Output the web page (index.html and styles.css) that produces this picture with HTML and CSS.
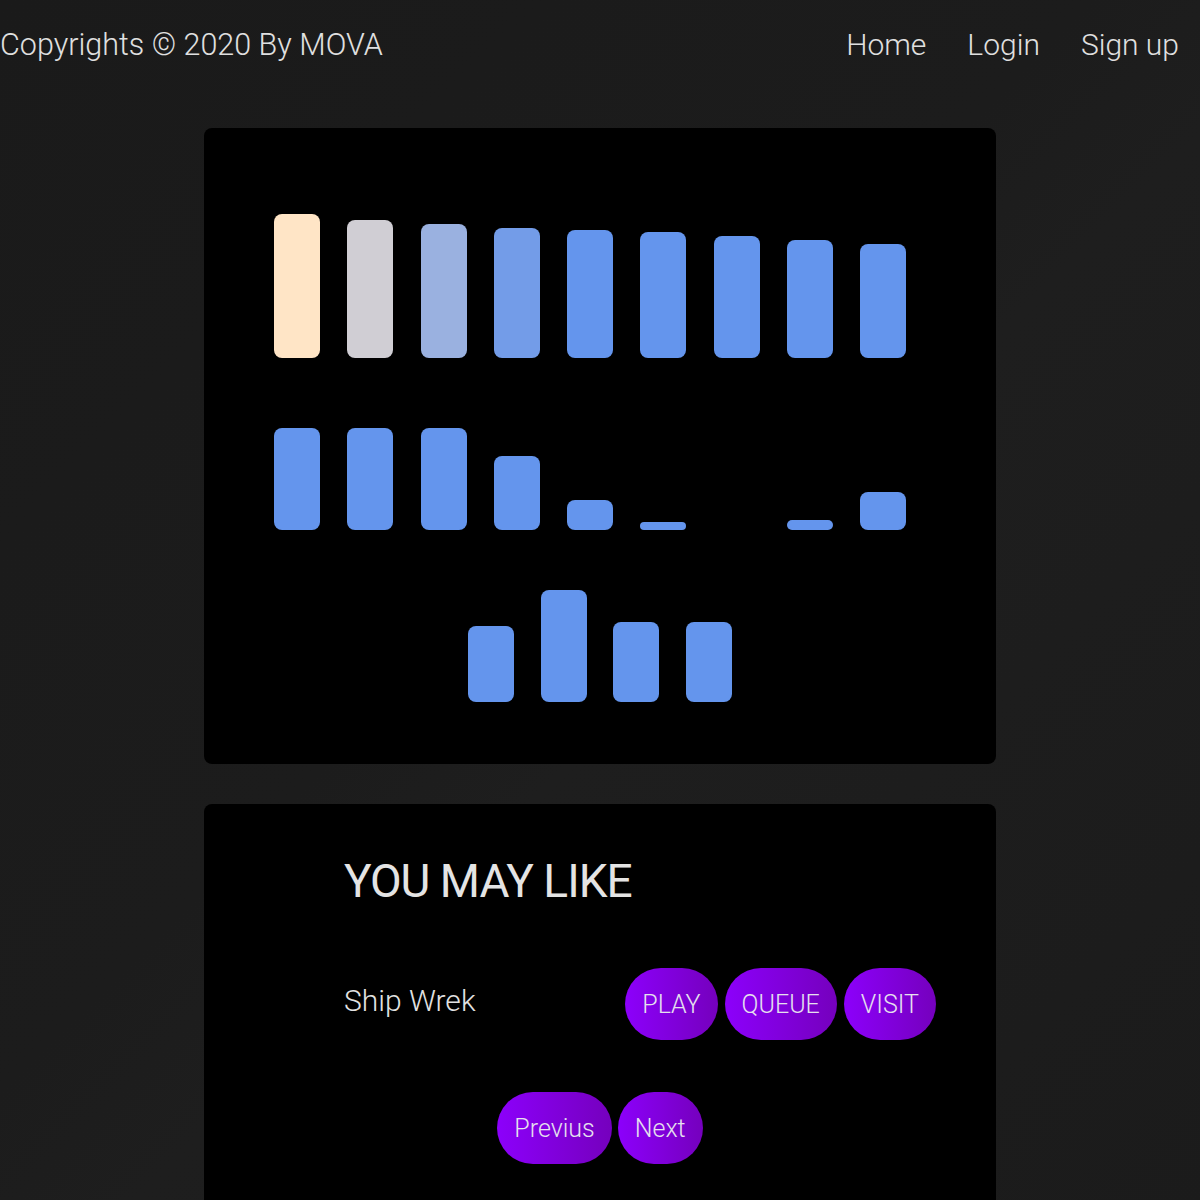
FILE: index.html
```html
<!DOCTYPE html>
<html lang="en">
<head>
<meta charset="utf-8">
<title>MOVA</title>
<link rel="stylesheet" href="styles.css">
</head>
<body>
<header class="topbar">
  <div class="copy">Copyrights © 2020 By MOVA</div>
  <nav class="nav">
    <a class="nav-link" href="#">Home</a>
    <a class="nav-link" href="#">Login</a>
    <a class="nav-link" href="#">Sign up</a>
  </nav>
</header>

<main class="main">
  <section class="card visual">
    <div class="bar-row">
      <div class="bar bar-c1" style="height:144px"></div>
      <div class="bar bar-c2" style="height:138px"></div>
      <div class="bar bar-c3" style="height:134px"></div>
      <div class="bar bar-c4" style="height:130px"></div>
      <div class="bar" style="height:128px"></div>
      <div class="bar" style="height:126px"></div>
      <div class="bar" style="height:122px"></div>
      <div class="bar" style="height:118px"></div>
      <div class="bar" style="height:114px"></div>
    </div>
    <div class="bar-row">
      <div class="bar" style="height:102px"></div>
      <div class="bar" style="height:102px"></div>
      <div class="bar" style="height:102px"></div>
      <div class="bar" style="height:74px"></div>
      <div class="bar" style="height:30px"></div>
      <div class="bar" style="height:8px"></div>
      <div class="bar" style="height:0px"></div>
      <div class="bar" style="height:10px"></div>
      <div class="bar" style="height:38px"></div>
    </div>
    <div class="bar-row bar-row-center">
      <div class="bar" style="height:76px"></div>
      <div class="bar" style="height:112px"></div>
      <div class="bar" style="height:80px"></div>
      <div class="bar" style="height:80px"></div>
    </div>
  </section>

  <section class="card like">
    <h1 class="like-title">YOU MAY LIKE</h1>
    <div class="song">
      <div class="song-name">Ship Wrek</div>
      <div class="song-actions">
        <button class="pill">PLAY</button>
        <button class="pill">QUEUE</button>
        <button class="pill">VISIT</button>
      </div>
    </div>
    <div class="pager">
      <button class="pill">Previus</button>
      <button class="pill">Next</button>
    </div>
  </section>
</main>
</body>
</html>
```

FILE: styles.css
```css
* { box-sizing: border-box; }

html, body {
  margin: 0;
  padding: 0;
}

body {
  min-height: 1200px;
  background: linear-gradient(135deg, #1a1a1a 0%, #1c1c1c 45%, #1e1e1e 55%, #1b1b1b 100%);
  color: #e2e2e2;
  font-family: Roboto, "Liberation Sans", sans-serif;
  overflow: hidden;
}

.topbar {
  height: 90px;
  display: flex;
  align-items: center;
  justify-content: space-between;
  padding: 0 21px 0 0;
}

.copy {
  font-size: 30.5px;
  line-height: 32px;
  font-weight: 300;
  color: #e0e0e0;
}

.nav {
  display: flex;
  gap: 41px;
}

.nav-link {
  font-size: 30px;
  line-height: 32px;
  font-weight: 300;
  color: #e0e0e0;
  text-decoration: none;
}

.main {
  display: flex;
  flex-direction: column;
  align-items: center;
  gap: 40px;
  padding-top: 38px;
}

.card {
  width: 792px;
  background: #000;
  border-radius: 8px;
}

.visual {
  height: 636px;
  padding: 58px 0 0 70px;
}

.bar-row {
  height: 172px;
  display: flex;
  align-items: flex-end;
  gap: 27.25px;
}

.bar-row-center {
  justify-content: center;
  gap: 26.67px;
  margin-left: -70px;
}

.bar {
  width: 46px;
  background: #6495ed;
  border-radius: 8px;
}

.bar-c1 { background: #ffe5c6; }
.bar-c2 { background: #d0ced4; }
.bar-c3 { background: #9ab1e0; }
.bar-c4 { background: #739ce8; }

.like {
  padding: 49px 60px 60px 140px;
}

.like-title {
  margin: 0;
  font-size: 46px;
  line-height: 56px;
  font-weight: 400;
  color: #e4e4e4;
  letter-spacing: -1px;
}

.song {
  margin-top: 59px;
  display: flex;
  align-items: center;
  justify-content: space-between;
}

.song-name {
  font-size: 30px;
  line-height: 32px;
  font-weight: 300;
  color: #e2e2e2;
  margin-top: -6px;
}

.song-actions {
  display: flex;
  gap: 7px;
}

.pager {
  margin: 52px 0 0 -80px;
  display: flex;
  justify-content: center;
  gap: 6px;
}

.pill {
  height: 72px;
  padding: 0 17px;
  border: none;
  border-radius: 40px;
  background: linear-gradient(to right, #8c00fb, #7500bd);
  color: #e6e0ee;
  font-family: Roboto, "Liberation Sans", sans-serif;
  font-size: 25px;
  font-weight: 300;
  line-height: 1;
  cursor: pointer;
}
```
